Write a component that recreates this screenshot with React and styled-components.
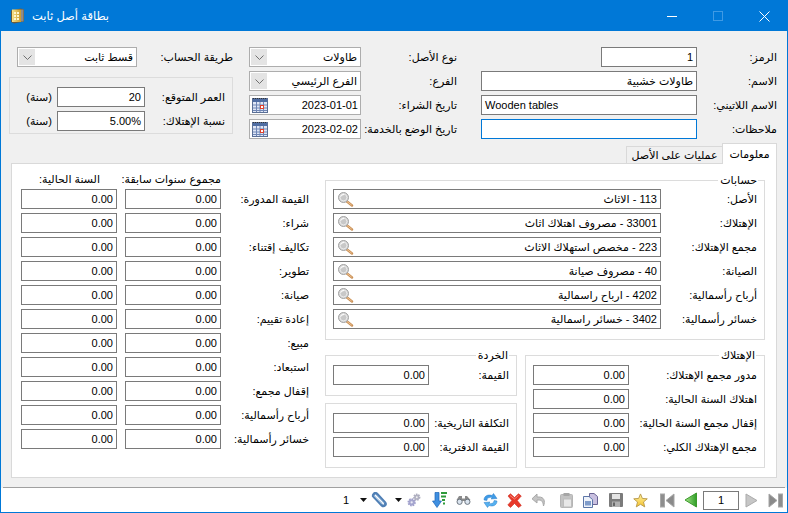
import React from 'react';
import styled, { createGlobalStyle } from 'styled-components';

const GlobalStyle = createGlobalStyle`
  html, body {
    margin: 0;
    padding: 0;
    overflow: hidden;
  }
  * {
    box-sizing: border-box;
  }
`;

const Win = styled.div`
  width: 788px;
  height: 513px;
  display: flex;
  flex-direction: column;
  border: 1px solid #0078d7;
  background: #f0f0f0;
  direction: rtl;
  color: #000;
  font-family: "Liberation Sans", "DejaVu Sans", sans-serif;
  font-size: 11px;
`;

const TitleBar = styled.div`
  height: 30px;
  flex: none;
  display: flex;
  align-items: center;
  direction: ltr;
  padding-left: 9px;
  background: #0078d7;
  color: #fff;
`;

const TitleText = styled.span`
  direction: rtl;
  margin-left: 7px;
  font-size: 11.5px;
`;

const WinButton = styled.div`
  width: 46px;
  height: 30px;
  display: flex;
  align-items: center;
  justify-content: center;
`;

const WinButtons = styled.div`
  margin-left: auto;
  display: flex;
`;

const Top = styled.div`
  display: flex;
  align-items: flex-start;
  padding: 16px 10px 0 0;
`;

const FormGrid = styled.div`
  display: grid;
  grid-template-columns: ${(p) => p.$label}px ${(p) => p.$field}px;
  grid-auto-rows: 20px;
  row-gap: 4px;
  align-items: center;
  margin-left: ${(p) => p.$after || 0}px;
`;

const Label = styled.label`
  white-space: nowrap;
  line-height: 14px;
`;

const Field = styled.div`
  height: 20px;
  display: flex;
  align-items: center;
  padding: 0 3px;
  background: #fff;
  border: 1px solid ${(p) => (p.$focus ? '#0078d7' : '#7a7a7a')};
  white-space: nowrap;
  overflow: hidden;
  width: ${(p) => (p.$width ? `${p.$width}px` : 'auto')};
  direction: ${(p) => (p.$ltr ? 'ltr' : 'rtl')};
  justify-content: ${(p) => (p.$num ? 'flex-end' : 'flex-start')};
`;

const Combo = styled(Field)`
  border-color: #adadad;
  padding: 0 3px 0 1px;
`;

const ComboArrow = styled.span`
  width: 16px;
  height: 16px;
  margin-right: auto;
  display: flex;
  align-items: center;
  justify-content: center;
  background: #e4e4e4;
`;

const DateBox = styled(Field)`
  border-color: #adadad;
  direction: ltr;
  justify-content: space-between;
  padding: 0 2px 0 2px;
`;

const IconSlot = styled.span`
  display: flex;
  margin-right: auto;
  flex: none;
`;

const LeftTop = styled.div`
  width: 224px;
  display: flex;
  flex-direction: column;
`;

const GroupBox = styled.div`
  position: relative;
  border: 1px solid #dcdcdc;
  padding: ${(p) => p.$top ?? 9}px 7px 0 7px;
  height: ${(p) => p.$height}px;
  width: ${(p) => (p.$width ? `${p.$width}px` : 'auto')};
`;

const LifeBox = styled(GroupBox)`
  margin-top: 10px;
`;

const Legend = styled.span`
  position: absolute;
  top: -8px;
  right: ${(p) => p.$right ?? 7}px;
  padding: 0 1px 0 2px;
  background: #fff;
  line-height: 14px;
`;

const LifeRow = styled.div`
  display: grid;
  grid-template-columns: 80px 88px auto;
  grid-auto-rows: 20px;
  row-gap: 4px;
  align-items: center;
`;

const Unit = styled.span`
  margin-right: 5px;
`;

const Tabs = styled.div`
  display: flex;
  height: 21px;
  margin: 4px 10px -1px 10px;
  position: relative;
`;

const Tab = styled.div`
  height: ${(p) => (p.$active ? 21 : 18)}px;
  margin-top: ${(p) => (p.$active ? 0 : 3)}px;
  width: ${(p) => p.$width}px;
  display: flex;
  align-items: center;
  justify-content: center;
  border: 1px solid #d9d9d9;
  border-bottom: ${(p) => (p.$active ? 'none' : '1px solid #d9d9d9')};
  border-right: ${(p) => (p.$active ? '1px solid #d9d9d9' : 'none')};
  background: ${(p) => (p.$active ? '#fff' : '#f0f0f0')};
  position: relative;
  z-index: ${(p) => (p.$active ? 2 : 0)};
`;

const Panel = styled.div`
  height: 315px;
  margin: 0 10px;
  display: flex;
  background: #fff;
  border: 1px solid #d9d9d9;
  padding: 0 11px 0 9px;
`;

const RightArea = styled.div`
  width: 440px;
  margin-left: 16px;
  padding-top: 16px;
  display: flex;
  flex-direction: column;
  gap: 15px;
`;

const BottomGroups = styled.div`
  display: flex;
  gap: 8px;
`;

const Stack = styled.div`
  display: flex;
  flex-direction: column;
  gap: 7px;
`;

const Totals = styled.div`
  width: 288px;
  padding-top: 5px;
`;

const TotalsHead = styled.div`
  display: grid;
  grid-template-columns: 88px 104px 96px;
  height: 20px;
  align-items: center;
`;

const HeadCell = styled.span`
  grid-column: ${(p) => p.$col};
  white-space: nowrap;
  padding-right: ${(p) => p.$inset || 0}px;
`;

const TotalsGrid = styled.div`
  display: grid;
  grid-template-columns: 80px 96px 96px;
  column-gap: 8px;
  grid-auto-rows: 20px;
  row-gap: 4px;
  align-items: center;
`;

const Divider = styled.div`
  height: 1px;
  margin: 9px 2px 0 2px;
  background: #a0a0a0;
`;

const Toolbar = styled.div`
  flex: 1;
  display: flex;
  align-items: center;
  background: #fff;
`;

const ToolBtn = styled.span`
  width: ${(p) => p.$width || 24}px;
  height: 20px;
  flex: none;
  display: flex;
  align-items: center;
  justify-content: center;
  margin-left: ${(p) => p.$space || 0}px;
`;

const PageBox = styled.div`
  width: 36px;
  height: 19px;
  flex: none;
  display: flex;
  align-items: center;
  justify-content: center;
  border: 1px solid #7a7a7a;
`;

const SkipSvg = styled.svg`
  transform: ${(p) => (p.$flip ? 'scaleX(-1)' : 'none')};
`;

const Chevron = () => (
  <svg width="9" height="5" viewBox="0 0 9 5">
    <path d="M0.5 0.5 L4.5 4.5 L8.5 0.5" fill="none" stroke="#707070" strokeWidth="1" />
  </svg>
);

const CalendarIcon = () => (
  <svg width="16" height="16" viewBox="0 0 16 16">
    <rect x="0.5" y="1.5" width="15" height="14" fill="#dfe6f5" stroke="#5a6f96" />
    <rect x="1" y="2" width="14" height="3" fill="#4f6da3" />
    <path d="M1 1h1v1H1zm2 0h1v1H3zm2 0h1v1H5zm2 0h1v1H7zm2 0h1v1H9zm2 0h1v1h-1zm2 0h1v1h-1z" fill="#333" />
    <path d="M1 8h14M1 11h14M1 13.5h14M4.5 5v10M8 5v10M11.5 5v10" stroke="#6f86b5" strokeWidth="1" />
    <rect x="8.5" y="8.5" width="3" height="3" fill="#fff" stroke="#e0412c" />
  </svg>
);

const SearchIcon = () => (
  <svg width="17" height="15" viewBox="0 0 17 15">
    <path d="M10 9.5 L15 13.5" stroke="#c98f55" strokeWidth="2.4" strokeLinecap="round" />
    <path d="M10 9.5 L14.5 13" stroke="#f0c79a" strokeWidth="0.9" strokeLinecap="round" />
    <circle cx="6.5" cy="5.5" r="5" fill="#d6d6d6" stroke="#a2a2a2" />
    <circle cx="6.5" cy="5.5" r="3.4" fill="#c8c8c8" stroke="#e9e9e9" />
    <path d="M4 4.5 a3 3 0 0 1 3 -2" stroke="#fff" fill="none" />
  </svg>
);

const BookIcon = () => (
  <svg width="15" height="16" viewBox="0 0 15 16">
    <defs>
      <linearGradient id="bookGold" x1="0" y1="0" x2="1" y2="0">
        <stop offset="0" stopColor="#f7e28c" />
        <stop offset="1" stopColor="#c99a2e" />
      </linearGradient>
    </defs>
    <path d="M1 2.5 L11 0.5 L14 1.5 V13.5 L4 15.5 L1 14 Z" fill="#6b5a3a" />
    <rect x="2" y="1.5" width="9" height="12.5" fill="url(#bookGold)" />
    <rect x="11" y="1.5" width="2.5" height="12" fill="#8c8c8c" />
    <path d="M4 4h2v2H4zm3 0h2v2H7zM4 7h2v2H4zm3 0h2v2H7zM4 10h2v2H4zm3 0h2v2H7z" fill="#fdf6d2" />
  </svg>
);

const SkipIcon = ({ flip }) => (
  <SkipSvg $flip={flip} width="15" height="15" viewBox="0 0 15 15">
    <rect x="0.5" y="1" width="4" height="13" fill="#8e8e8e" stroke="#a8a8a8" />
    <path d="M14 1 V14 L6 7.5 Z" fill="#8a8a8a" stroke="#a5a5a5" strokeLinejoin="round" />
  </SkipSvg>
);

const PrevIcon = () => (
  <svg width="14" height="16" viewBox="0 0 14 16">
    <defs>
      <linearGradient id="prevGreen" x1="0" y1="0" x2="1" y2="0">
        <stop offset="0" stopColor="#a8e48c" />
        <stop offset="1" stopColor="#2f9e26" />
      </linearGradient>
    </defs>
    <path d="M12.5 1 V15 L1 8 Z" fill="url(#prevGreen)" stroke="#3c9a2d" strokeLinejoin="round" />
  </svg>
);

const NextIcon = () => (
  <svg width="13" height="15" viewBox="0 0 13 15">
    <path d="M1 1 V14 L12 7.5 Z" fill="#c6c6c6" stroke="#ababab" strokeLinejoin="round" />
  </svg>
);

const StarIcon = () => (
  <svg width="15" height="15" viewBox="0 0 16 16">
    <defs>
      <linearGradient id="starGold" x1="0" y1="0" x2="0" y2="1">
        <stop offset="0" stopColor="#fff3a0" />
        <stop offset="1" stopColor="#f5c12e" />
      </linearGradient>
    </defs>
    <path d="M8 1 L10 5.8 L15.2 6.2 L11.2 9.6 L12.5 14.8 L8 12 L3.5 14.8 L4.8 9.6 L0.8 6.2 L6 5.8 Z" fill="url(#starGold)" stroke="#b99a4a" strokeLinejoin="round" />
  </svg>
);

const SaveIcon = () => (
  <svg width="14" height="14" viewBox="0 0 14 14">
    <rect x="0" y="0" width="14" height="14" rx="1" fill="#7b7b7b" />
    <rect x="3" y="1" width="8" height="5" fill="#e4e4e4" />
    <rect x="3" y="8.5" width="8" height="5.5" fill="#b0b0b0" />
    <rect x="4" y="9.5" width="2" height="3.5" fill="#666" />
  </svg>
);

const CopyIcon = () => (
  <svg width="15" height="15" viewBox="0 0 15 15">
    <path d="M6.5 0.5 H11 L14.5 3.5 V11.5 H6.5 Z" fill="#c9c0e0" stroke="#6a6494" />
    <path d="M0.5 3.5 H6 L9.5 6.5 V14.5 H0.5 Z" fill="#eef2fa" stroke="#5c76a8" />
    <rect x="2" y="8" width="6" height="4.5" fill="#7f9ccb" />
  </svg>
);

const PasteIcon = () => (
  <svg width="13" height="15" viewBox="0 0 13 15">
    <rect x="0.5" y="1.5" width="12" height="13" rx="1" fill="#c3c3c3" stroke="#b5b5b5" />
    <rect x="3.5" y="0" width="6" height="3" fill="#a6a6a6" />
    <rect x="3.5" y="6" width="8" height="8" fill="#e8e8e8" stroke="#bdbdbd" />
  </svg>
);

const UndoIcon = () => (
  <svg width="15" height="14" viewBox="0 0 15 14">
    <path d="M12.5 13 C14.5 8 13 4 8 4 H6 V1 L1 5.8 L6 10 V7 H8 C11 7 12 9 12.5 13 Z" fill="#c4c4c4" stroke="#a8a8a8" strokeLinejoin="round" />
  </svg>
);

const DeleteIcon = () => (
  <svg width="15" height="15" viewBox="0 0 15 15">
    <path d="M1 3 L3.5 0.8 L7.5 4.5 L11.5 0.8 L14.3 3 L10.3 7.5 L14.3 12.5 L11.5 14.5 L7.5 10.5 L3.5 14.5 L0.8 12 L4.8 7.5 Z" fill="#e8392a" stroke="#cf2d20" strokeWidth="0.6" strokeLinejoin="round" />
    <path d="M3 2.5 L7.5 6 L11.5 2.5" fill="none" stroke="#f79a8e" strokeWidth="0.8" />
  </svg>
);

const RefreshIcon = () => (
  <svg width="15" height="15" viewBox="0 0 15 15">
    <path d="M1 7 C1 3 5 1 9 2.5 L10.5 0.5 L14 5.5 L8 6 L9.3 4.6 C6.5 3.8 4 5 3.8 7.5 Z" fill="#3f9be6" stroke="#2a7cc9" strokeWidth="0.5" strokeLinejoin="round" />
    <path d="M14 8 C14 12 10 14 6 12.5 L4.5 14.5 L1 9.5 L7 9 L5.7 10.4 C8.5 11.2 11 10 11.2 7.5 Z" fill="#55b1f0" stroke="#2a7cc9" strokeWidth="0.5" strokeLinejoin="round" />
  </svg>
);

const BinocularsIcon = () => (
  <svg width="15" height="10" viewBox="0 0 15 10">
    <path d="M0.5 5 L3 1 H6 V3.5 H9 V1 H11 L14.5 5 L10 6 H5 Z" fill="#8a8a8a" />
    <circle cx="3.6" cy="6.8" r="2.6" fill="#dbe5f0" stroke="#6d7680" />
    <circle cx="11.4" cy="6.8" r="2.6" fill="#dbe5f0" stroke="#6d7680" />
  </svg>
);

const SortIcon = () => (
  <svg width="15" height="16" viewBox="0 0 15 16">
    <path d="M3 0.5 H7 V9 H9.5 L5 15.5 L0.5 9 H3 Z" fill="#3f8fe0" stroke="#1e66b8" strokeWidth="0.7" strokeLinejoin="round" />
    <path d="M9 0h6v2H9zM9 3.5h5v2H9zM10 7h3v2h-3zM11 10.5h2v2h-2z" fill="#2f9a3a" />
  </svg>
);

const GearsIcon = () => (
  <svg width="14" height="14" viewBox="0 0 15 15">
    <circle cx="5" cy="10" r="3.4" fill="#a8a8d0" stroke="#a0a0cc" strokeWidth="2.2" strokeDasharray="1.6 1" />
    <circle cx="5" cy="10" r="1.2" fill="#ececf6" />
    <circle cx="10.5" cy="4.5" r="2.8" fill="#b4b4c4" stroke="#adadbe" strokeWidth="2.2" strokeDasharray="1.5 0.9" />
    <circle cx="10.5" cy="4.5" r="1" fill="#f0f0f0" />
  </svg>
);

const ClipIcon = () => (
  <svg width="16" height="16" viewBox="0 0 16 16">
    <path d="M2.2 4.2 L10.8 13.2 C13 15.2 15.8 12.5 13.8 10.3 L5.8 1.8 C4 0.2 1 2.6 2.8 4.8 L10 12" fill="none" stroke="#4f7fb5" strokeWidth="2.6" strokeLinecap="round" />
    <path d="M3 3.8 L11 12.2 M5 2.6 L13.2 11" fill="none" stroke="#b5d0ea" strokeWidth="0.8" />
  </svg>
);

const DropIcon = () => (
  <svg width="7" height="4" viewBox="0 0 7 4">
    <path d="M0 0 H7 L3.5 4 Z" fill="#111" />
  </svg>
);

function NumField() {
  return <Field $num $ltr>0.00</Field>;
}

function AccountField({ children }) {
  return (
    <Field>
      {children}
      <IconSlot><SearchIcon /></IconSlot>
    </Field>
  );
}

const accounts = [
  ['الأصل:', '113 - الاثاث'],
  ['الإهتلاك:', '33001 - مصروف اهتلاك اثاث'],
  ['مجمع الإهتلاك:', '223 - مخصص استهلاك الاثاث'],
  ['الصيانة:', '40 - مصروف صيانة'],
  ['أرباح رأسمالية:', '4202 - ارباح راسمالية'],
  ['خسائر رأسمالية:', '3402 - خسائر راسمالية'],
];

const depreciation = [
  'مدور مجمع الإهتلاك:',
  'اهتلاك السنة الحالية:',
  'إقفال مجمع السنة الحالية:',
  'مجمع الإهتلاك الكلي:',
];

const totals = [
  'القيمة المدورة:',
  'شراء:',
  'تكاليف إقتناء:',
  'تطوير:',
  'صيانة:',
  'إعادة تقييم:',
  'مبيع:',
  'استبعاد:',
  'إقفال مجمع:',
  'أرباح رأسمالية:',
  'خسائر رأسمالية:',
];

export default function App() {
  return (
    <Win>
      <GlobalStyle />
      <TitleBar>
        <BookIcon />
        <TitleText>بطاقة أصل ثابت</TitleText>
        <WinButtons>
          <WinButton>
            <svg width="10" height="10" viewBox="0 0 10 10"><path d="M0 5.5 H10" stroke="#fff" /></svg>
          </WinButton>
          <WinButton>
            <svg width="10" height="10" viewBox="0 0 10 10"><rect x="0.5" y="0.5" width="9" height="9" fill="none" stroke="#3f9ae4" /></svg>
          </WinButton>
          <WinButton>
            <svg width="11" height="11" viewBox="0 0 11 11"><path d="M0.5 0.5 L10.5 10.5 M10.5 0.5 L0.5 10.5" stroke="#fff" /></svg>
          </WinButton>
        </WinButtons>
      </TitleBar>

      <Top>
        <FormGrid $label={80} $field={216} $after={24}>
          <Label>الرمز:</Label>
          <Field $width={96} $num $ltr>1</Field>
          <Label>الاسم:</Label>
          <Field>طاولات خشبية</Field>
          <Label>الاسم اللاتيني:</Label>
          <Field $ltr>Wooden tables</Field>
          <Label>ملاحظات:</Label>
          <Field $focus />
        </FormGrid>

        <FormGrid $label={96} $field={112} $after={16}>
          <Label>نوع الأصل:</Label>
          <Combo>طاولات<ComboArrow><Chevron /></ComboArrow></Combo>
          <Label>الفرع:</Label>
          <Combo>الفرع الرئيسي<ComboArrow><Chevron /></ComboArrow></Combo>
          <Label>تاريخ الشراء:</Label>
          <DateBox><CalendarIcon />2023-01-01</DateBox>
          <Label>تاريخ الوضع بالخدمة:</Label>
          <DateBox><CalendarIcon />2023-02-02</DateBox>
        </FormGrid>

        <LeftTop>
          <FormGrid $label={96} $field={120} $after={8}>
            <Label>طريقة الحساب:</Label>
            <Combo>قسط ثابت<ComboArrow><Chevron /></ComboArrow></Combo>
          </FormGrid>
          <LifeBox $height={57}>
            <LifeRow>
              <Label>العمر المتوقع:</Label>
              <Field $num $ltr>20</Field>
              <Unit>(سنة)</Unit>
              <Label>نسبة الإهتلاك:</Label>
              <Field $num $ltr>5.00%</Field>
              <Unit>(سنة)</Unit>
            </LifeRow>
          </LifeBox>
        </LeftTop>
      </Top>

      <Tabs>
        <Tab $active $width={55}>معلومات</Tab>
        <Tab $width={96}>عمليات على الأصل</Tab>
      </Tabs>

      <Panel>
        <RightArea>
          <GroupBox $height={160} $top={8}>
            <Legend $right={6}>حسابات</Legend>
            <FormGrid $label={96} $field={328}>
              {accounts.map(([label, value]) => (
                <React.Fragment key={label}>
                  <Label>{label}</Label>
                  <AccountField>{value}</AccountField>
                </React.Fragment>
              ))}
            </FormGrid>
          </GroupBox>

          <BottomGroups>
            <GroupBox $height={113} $width={240}>
              <Legend $right={8}>الإهتلاك</Legend>
              <FormGrid $label={128} $field={96}>
                {depreciation.map((label) => (
                  <React.Fragment key={label}>
                    <Label>{label}</Label>
                    <NumField />
                  </React.Fragment>
                ))}
              </FormGrid>
            </GroupBox>
            <Stack>
              <GroupBox $height={41} $width={192}>
                <Legend>الخردة</Legend>
                <FormGrid $label={80} $field={96}>
                  <Label>القيمة:</Label>
                  <NumField />
                </FormGrid>
              </GroupBox>
              <GroupBox $height={65} $width={192}>
                <FormGrid $label={80} $field={96}>
                  <Label>التكلفة التاريخية:</Label>
                  <NumField />
                  <Label>القيمة الدفترية:</Label>
                  <NumField />
                </FormGrid>
              </GroupBox>
            </Stack>
          </BottomGroups>
        </RightArea>

        <Totals>
          <TotalsHead>
            <HeadCell $col={2}>مجموع سنوات سابقة:</HeadCell>
            <HeadCell $col={3} $inset={17}>السنة الحالية:</HeadCell>
          </TotalsHead>
          <TotalsGrid>
            {totals.map((label) => (
              <React.Fragment key={label}>
                <Label>{label}</Label>
                <NumField />
                <NumField />
              </React.Fragment>
            ))}
          </TotalsGrid>
        </Totals>
      </Panel>

      <Divider />
      <Toolbar>
        <ToolBtn><SkipIcon flip /></ToolBtn>
        <ToolBtn><NextIcon /></ToolBtn>
        <PageBox>1</PageBox>
        <ToolBtn><PrevIcon /></ToolBtn>
        <ToolBtn $space={3}><SkipIcon /></ToolBtn>
        <ToolBtn><StarIcon /></ToolBtn>
        <ToolBtn $space={2}><SaveIcon /></ToolBtn>
        <ToolBtn><CopyIcon /></ToolBtn>
        <ToolBtn $space={4}><PasteIcon /></ToolBtn>
        <ToolBtn><UndoIcon /></ToolBtn>
        <ToolBtn><DeleteIcon /></ToolBtn>
        <ToolBtn $space={3}><RefreshIcon /></ToolBtn>
        <ToolBtn><BinocularsIcon /></ToolBtn>
        <ToolBtn $space={1}><SortIcon /></ToolBtn>
        <ToolBtn><GearsIcon /></ToolBtn>
        <ToolBtn $width={8} $space={3}><DropIcon /></ToolBtn>
        <ToolBtn><ClipIcon /></ToolBtn>
        <ToolBtn $width={8} $space={8}><DropIcon /></ToolBtn>
        <ToolBtn $width={10}>1</ToolBtn>
      </Toolbar>
    </Win>
  );
}
